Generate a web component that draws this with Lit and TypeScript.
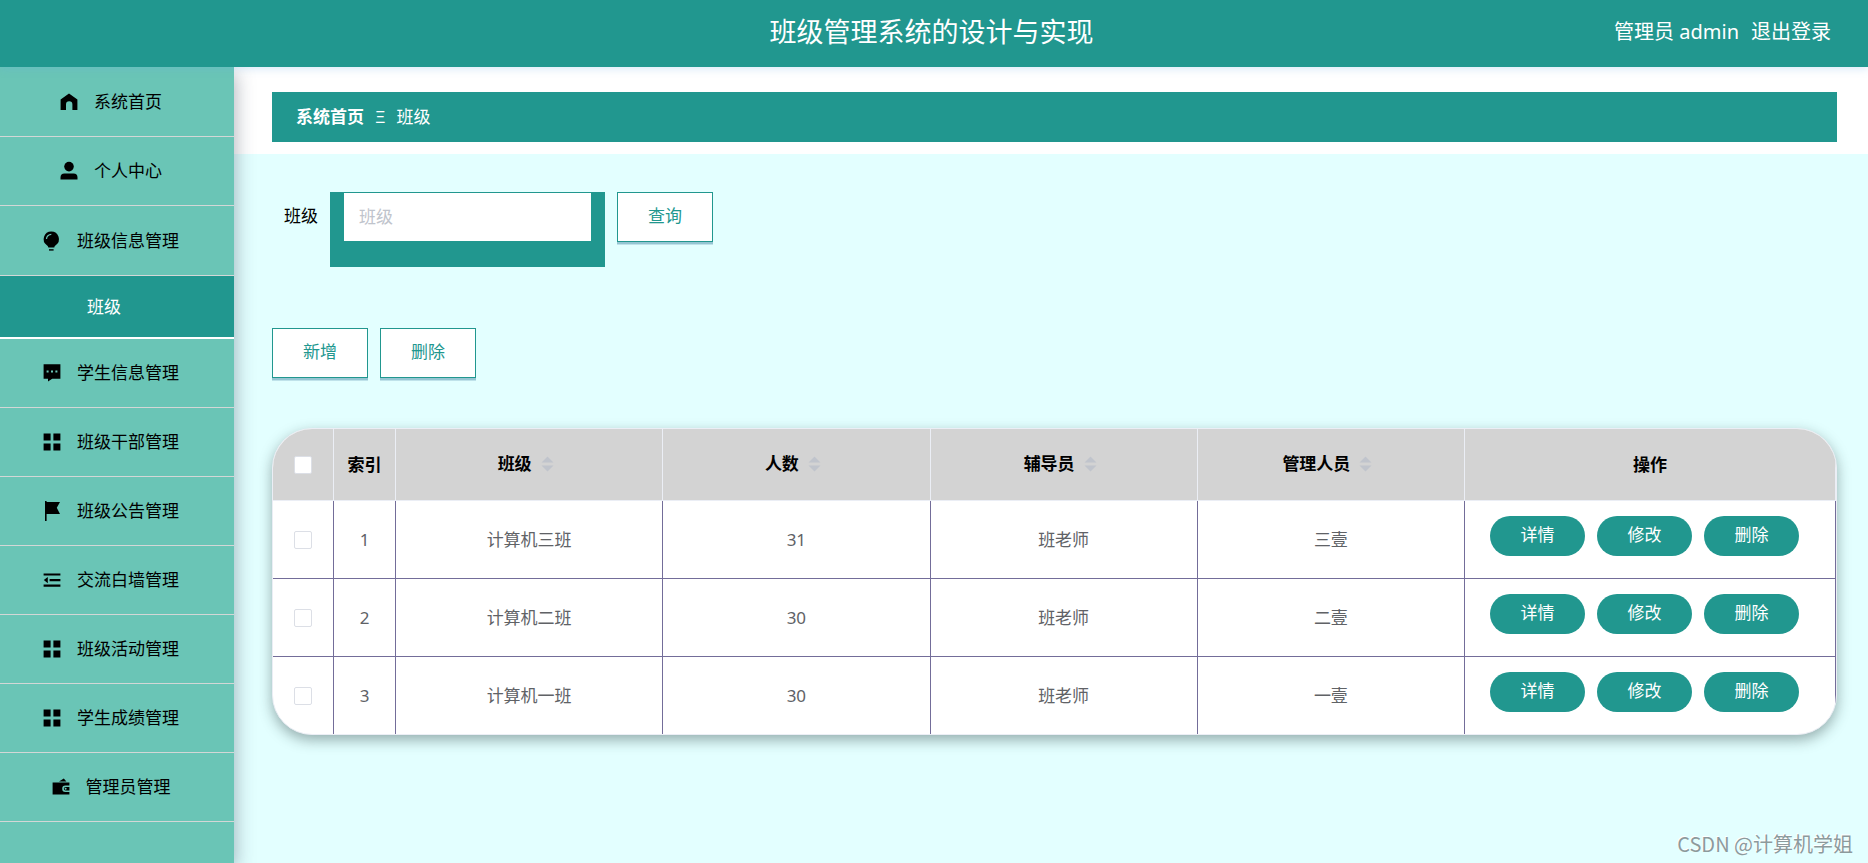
import { LitElement, html, css, svg, nothing } from "lit";
import { customElement, state } from "lit/decorators.js";

interface MenuItem {
  label: string;
  icon: string;
  children?: string[];
}

interface ClassRow {
  id: number;
  name: string;
  count: number;
  tutor: string;
  manager: string;
}

const MENU: MenuItem[] = [
  { label: "系统首页", icon: "home" },
  { label: "个人中心", icon: "user" },
  { label: "班级信息管理", icon: "bulb", children: ["班级"] },
  { label: "学生信息管理", icon: "chat" },
  { label: "班级干部管理", icon: "grid" },
  { label: "班级公告管理", icon: "flag" },
  { label: "交流白墙管理", icon: "fold" },
  { label: "班级活动管理", icon: "grid" },
  { label: "学生成绩管理", icon: "grid" },
  { label: "管理员管理", icon: "wallet" },
];

const ROWS: ClassRow[] = [
  { id: 1, name: "计算机三班", count: 31, tutor: "班老师", manager: "三壹" },
  { id: 2, name: "计算机二班", count: 30, tutor: "班老师", manager: "二壹" },
  { id: 3, name: "计算机一班", count: 30, tutor: "班老师", manager: "一壹" },
];

const ICONS: Record<string, unknown> = {
  home: svg`<path d="M9 .6 17.4 6.500v10.400h-5V11.500a3.200 3.200 0 0 0-6.400 0v5.400H.6V6.500z"/>`,
  user: svg`<circle cx="9" cy="4.600" r="4.800"/><path d="M.5 17.600v-2a4 4 0 0 1 4-4h9a4 4 0 0 1 4 4v2z"/>`,
  bulb: svg`<path fill-rule="evenodd" d="M8.300-.5a7.600 7.600 0 0 1 4.400 13.800c-.9.7-1.200 1.400-1.400 2.200h-6c-.2-.8-.5-1.500-1.400-2.200A7.600 7.600 0 0 1 8.300-.5zM2.900 7.100h1.200A4.200 4.200 0 0 1 8.300 2.900V1.700a5.400 5.400 0 0 0-5.400 5.400z"/><path d="M6 17.200h4.600v1.400H6z"/>`,
  chat: svg`<path fill-rule="evenodd" d="M.6.2h16.800v14.600H9.200L5 17.600v-2.800H.6zM3.600 6.600v2h2v-2zm4.400 0v2h2v-2zm4.400 0v2h2v-2z"/>`,
  grid: svg`<path d="M.6.6h7v7h-7zM10.400.6h7v7h-7zM.6 10.400h7v7h-7zM10.400 10.400h7v7h-7z"/>`,
  flag: svg`<path d="M2-1h1.600v1H17l-3.200 5.800L17 12H3.600v7H2z"/>`,
  fold: svg`<path d="M.6 2.400h16.800v2.200H.6zM6.600 8h10.800v2.200H6.600zM.6 13.500h16.800v2.200H.6zM.8 9.100 4.800 6v6.200z"/>`,
  wallet: svg`<path fill-rule="evenodd" d="M.6 4.600h16.800v3h-4a3.200 3.200 0 0 0 0 6.400h4v2.600H.6z"/><path d="M13.600 9h3.800v3.600h-3.800a1.800 1.800 0 0 1 0-3.600zM7 3.600 11.800.4l2.600 3.200z"/><circle cx="13.600" cy="10.800" r="1" fill="#6ac5b6"/>`,
};

@customElement("app-sidebar")
export class AppSidebar extends LitElement {
  static styles = css`
    :host {
      display: block;
      background: #6ac5b6;
      box-shadow: 1px 6px 18px rgba(40, 50, 70, 0.38);
      padding-top: 1px;
      z-index: 1;
    }
    .menu {
      list-style: none;
      margin: 0;
      padding: 0;
    }
    .item {
      display: flex;
      align-items: center;
      justify-content: center;
      gap: 16px;
      box-sizing: border-box;
      height: 69px;
      padding-right: 12px;
      border-bottom: 1px solid #d3d7d6;
      color: #000;
      font-size: 17px;
      line-height: 24px;
      text-decoration: none;
    }
    .item.parent {
      height: 70px;
    }
    .icon {
      width: 18px;
      height: 18px;
      flex: none;
      overflow: visible;
    }
    .sub {
      display: flex;
      align-items: center;
      justify-content: center;
      box-sizing: border-box;
      height: 63px;
      padding-right: 26px;
      background: #21978f;
      border-bottom: 2px solid #fff;
      color: #fff;
      font-size: 17px;
      line-height: 24px;
      text-decoration: none;
    }
  `;

  render() {
    return html`
      <nav>
        <ul class="menu">
          ${MENU.map(
            (m) => html`
              <li>
                <a class=${m.children ? "item parent" : "item"} href="#">
                  <svg class="icon" viewBox="0 0 18 18" aria-hidden="true">${ICONS[m.icon]}</svg>
                  <span>${m.label}</span>
                </a>
                ${m.children
                  ? m.children.map((c) => html`<a class="sub" href="#">${c}</a>`)
                  : nothing}
              </li>
            `
          )}
        </ul>
      </nav>
    `;
  }
}

@customElement("class-table")
export class ClassTable extends LitElement {
  static styles = css`
    :host {
      display: block;
      overflow: hidden;
      border: 1px solid #ebeef5;
      border-radius: 40px;
      background: #fff;
      box-shadow: 0 5px 14px rgba(30, 50, 50, 0.4);
    }
    .table {
      width: 100%;
      table-layout: fixed;
      border-collapse: separate;
      border-spacing: 0;
      font-size: 17px;
      line-height: 24px;
      color: #606266;
      text-align: center;
    }
    .select-col {
      width: 61px;
    }
    .index-col {
      width: 62px;
    }
    .actions-col {
      width: 371px;
    }
    .head {
      height: 72px;
      box-sizing: border-box;
      padding: 0;
      background: #d3d3d3;
      border-right: 1px solid #ebeef5;
      border-bottom: 1px solid #ebeef5;
      color: #000;
      font-weight: 700;
    }
    .sortable {
      display: inline-flex;
      align-items: center;
      gap: 9px;
      padding: 0 7px 2px 0;
      border: 0;
      background: none;
      color: inherit;
      font: inherit;
    }
    .sort {
      width: 13px;
      height: 16px;
      fill: #c0c4cc;
    }
    .cell {
      height: 78px;
      box-sizing: border-box;
      padding: 0;
      border-right: 1px solid #736d99;
      border-bottom: 1px solid #736d99;
    }
    .row:last-child .cell {
      height: 77px;
      border-bottom: 0;
    }
    .check {
      appearance: none;
      display: block;
      width: 18px;
      height: 18px;
      margin: 0 auto;
      box-sizing: border-box;
      border: 1px solid #dcdfe6;
      border-radius: 2px;
      background: #fff;
    }
    .check:checked {
      background: #21978f;
    }
    .actions {
      display: flex;
      gap: 12px;
      padding: 0 0 7px 25px;
    }
    .action {
      width: 95px;
      height: 40px;
      padding: 0 0 2px;
      border: 0;
      border-radius: 20px;
      background: #21978f;
      color: #fff;
      font: inherit;
    }
  `;

  private sortHead(label: string) {
    return html`
      <th class="head" scope="col">
        <button class="sortable" type="button">
          ${label}
          <svg class="sort" viewBox="0 0 13 16" aria-hidden="true">
            <path d="M6.500.5 12.500 6.500H.5zM.5 9.500h12L6.500 15.500z" />
          </svg>
        </button>
      </th>
    `;
  }

  render() {
    return html`
      <table class="table">
        <colgroup>
          <col class="select-col" />
          <col class="index-col" />
          <col />
          <col />
          <col />
          <col />
          <col class="actions-col" />
        </colgroup>
        <thead>
          <tr>
            <th class="head" scope="col">
              <input class="check" type="checkbox" aria-label="全选" />
            </th>
            <th class="head" scope="col">索引</th>
            ${["班级", "人数", "辅导员", "管理人员"].map((l) => this.sortHead(l))}
            <th class="head" scope="col">操作</th>
          </tr>
        </thead>
        <tbody>
          ${ROWS.map(
            (r) => html`
              <tr class="row">
                <td class="cell">
                  <input class="check" type="checkbox" aria-label=${r.name} />
                </td>
                <td class="cell">${r.id}</td>
                <td class="cell">${r.name}</td>
                <td class="cell">${r.count}</td>
                <td class="cell">${r.tutor}</td>
                <td class="cell">${r.manager}</td>
                <td class="cell">
                  <div class="actions">
                    ${["详情", "修改", "删除"].map(
                      (a) => html`<button class="action" type="button">${a}</button>`
                    )}
                  </div>
                </td>
              </tr>
            `
          )}
        </tbody>
      </table>
    `;
  }
}

@customElement("app-root")
export class AppRoot extends LitElement {
  static styles = css`
    :host {
      display: flex;
      flex-direction: column;
      position: relative;
      min-height: 100vh;
      background: #e3ffff;
      font-family: "Noto Sans", "Noto Sans CJK SC", sans-serif;
      font-size: 17px;
      line-height: 24px;
      color: #000;
    }
    .header {
      display: grid;
      grid-template-columns: 1fr auto 1fr;
      align-items: center;
      box-sizing: border-box;
      height: 67px;
      padding: 0 37px 4px 32px;
      background: #21978f;
      box-shadow: 0 2px 8px rgba(100, 170, 230, 0.25);
      color: #fff;
      z-index: 2;
    }
    .title {
      grid-column: 2;
      margin: 0;
      font-size: 27px;
      line-height: 36px;
      font-weight: 400;
    }
    .account {
      display: flex;
      justify-content: flex-end;
      gap: 12px;
      font-size: 20px;
      line-height: 28px;
    }
    .logout {
      color: inherit;
      text-decoration: none;
    }
    .body {
      flex: 1;
      display: grid;
      grid-template-columns: 234px minmax(0, 1fr);
    }
    .crumb-wrap {
      padding: 25px 31px 12px 38px;
      background: #fff;
    }
    .crumbs {
      display: flex;
      align-items: center;
      gap: 11px;
      height: 50px;
      padding: 0 24px;
      background: #21978f;
      color: #fff;
    }
    .crumb-home {
      color: inherit;
      font-weight: 700;
      text-decoration: none;
    }
    .content {
      padding: 38px 31px 38px 38px;
    }
    .search {
      display: flex;
      align-items: flex-start;
      gap: 12px;
      padding-left: 12px;
    }
    .label {
      line-height: 48px;
    }
    .field {
      box-sizing: border-box;
      width: 275px;
      height: 75px;
      padding: 1px 14px 0;
      background: #21978f;
    }
    .input {
      display: block;
      box-sizing: border-box;
      width: 100%;
      height: 48px;
      padding: 0 15px 2px;
      border: 0;
      border-radius: 0;
      background: #fff;
      color: #606266;
      font: inherit;
    }
    .input::placeholder {
      color: #c0c4cc;
      opacity: 1;
    }
    .button {
      width: 96px;
      height: 50px;
      padding: 0 0 3px;
      border: 1px solid #21978f;
      background: #fff;
      box-shadow: 0 2px 0 #95c5d2, 0 3px 0 #bfe2ea;
      color: #21978f;
      font: inherit;
    }
    .toolbar {
      display: flex;
      gap: 12px;
      margin: 61px 0 50px;
    }
    .watermark {
      position: absolute;
      right: 15px;
      bottom: 5px;
      color: #8d9a9c;
      font-size: 20px;
      line-height: 28px;
      font-family: "Noto Sans CJK SC", sans-serif;
      text-shadow: -1px -1px 0 #fff;
      pointer-events: none;
    }
  `;

  @state() private keyword = "";

  render() {
    return html`
      <header class="header">
        <h1 class="title">班级管理系统的设计与实现</h1>
        <div class="account">
          <span>管理员 admin</span>
          <a class="logout" href="#">退出登录</a>
        </div>
      </header>
      <div class="body">
        <app-sidebar></app-sidebar>
        <main>
          <div class="crumb-wrap">
            <div class="crumbs">
              <a class="crumb-home" href="#">系统首页</a>
              <span>Ξ</span>
              <span>班级</span>
            </div>
          </div>
          <div class="content">
            <form class="search" @submit=${(e: Event) => e.preventDefault()}>
              <label class="label" for="keyword">班级</label>
              <div class="field">
                <input
                  id="keyword"
                  class="input"
                  type="text"
                  placeholder="班级"
                  .value=${this.keyword}
                  @input=${(e: Event) => (this.keyword = (e.target as HTMLInputElement).value)}
                />
              </div>
              <button class="button" type="submit">查询</button>
            </form>
            <div class="toolbar">
              <button class="button" type="button">新增</button>
              <button class="button" type="button">删除</button>
            </div>
            <class-table></class-table>
          </div>
        </main>
      </div>
      <div class="watermark">CSDN @计算机学姐</div>
    `;
  }
}
